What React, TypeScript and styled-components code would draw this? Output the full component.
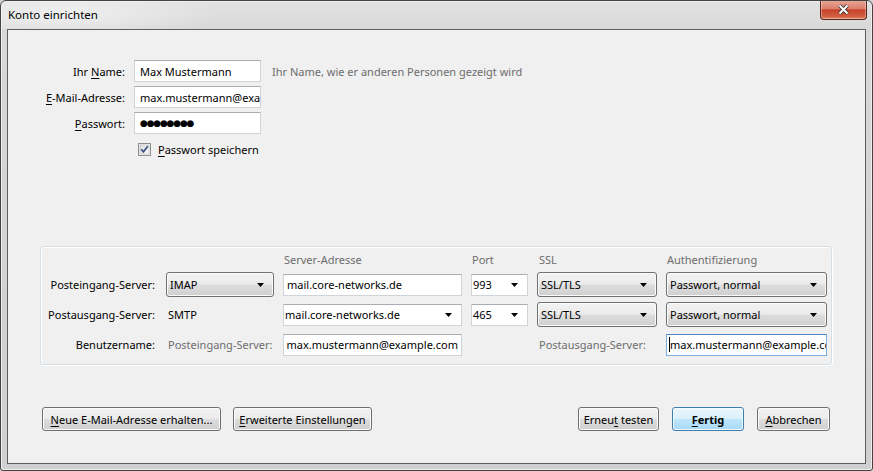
import * as React from "react";
import styled, { createGlobalStyle } from "styled-components";

const GlobalStyle = createGlobalStyle`
  html, body {
    margin: 0;
    padding: 0;
  }
  body {
    background: #d4d4d4;
    font-family: "Noto Sans", "Open Sans", sans-serif;
    font-size: 11px;
    color: #000;
  }
`;

const Window = styled.div`
  box-sizing: border-box;
  width: 873px;
  height: 471px;
  display: flex;
  flex-direction: column;
  border: 1px solid #434343;
  border-radius: 6px 6px 3px 3px;
  background: linear-gradient(180deg, #e2e2e2 0%, #d8d8d8 6%, #d3d3d3 50%, #d0d0d0 100%);
  box-shadow: inset 0 0 0 1px #eeeeee;
  overflow: hidden;
`;

const TitleBar = styled.div`
  height: 28px;
  display: flex;
  align-items: flex-start;
  padding: 0 5px 0 7px;
  background: radial-gradient(ellipse 160px 26px at 60px 14px, rgba(255, 255, 255, 0.55), rgba(255, 255, 255, 0) 100%);
`;

const Title = styled.div`
  line-height: 27px;
  font-size: 11.5px;
  flex: 1;
  color: #000;
`;

const CloseButton = styled.div`
  box-sizing: border-box;
  width: 47px;
  height: 20px;
  margin-top: -1px;
  border: 1px solid #5b2219;
  border-top: none;
  border-radius: 0 0 4px 4px;
  background: linear-gradient(180deg, #e8a899 0%, #dc806b 45%, #c64329 52%, #d25c3f 85%, #e08a6a 100%);
  box-shadow: inset 0 0 0 1px rgba(255, 255, 255, 0.35);
  display: flex;
  align-items: center;
  justify-content: center;
`;

const Client = styled.div`
  flex: 1;
  margin: 0 6px 6px 6px;
  border: 1px solid #5e5e5e;
  background: #f0f0f0;
  display: flex;
  flex-direction: column;
  padding: 30px 0 32px;
`;

const Form = styled.div`
  display: grid;
  grid-template-columns: 117px 127px 1fr;
  grid-auto-rows: 22px;
  column-gap: 9px;
  row-gap: 4px;
  align-items: center;
`;

const Label = styled.div`
  justify-self: end;
  white-space: nowrap;
`;

const Hint = styled.div`
  color: #6d6d6d;
  margin-left: 2px;
  white-space: nowrap;
`;

const Key = styled.span`
  text-decoration: underline;
  text-underline-offset: 2px;
`;

const Field = styled.div<{ $pad?: number; $focused?: boolean; $end?: boolean }>`
  box-sizing: border-box;
  height: 22px;
  border: 1px solid ${(p) => (p.$focused ? "#7aaee0" : "#d0d3d8")};
  border-top-color: ${(p) => (p.$focused ? "#4a88c2" : "#abadb3")};
  background: #fff;
  padding: 0 3px 0 ${(p) => p.$pad ?? 5}px;
  display: flex;
  align-items: center;
  justify-content: ${(p) => (p.$end ? "flex-end" : "flex-start")};
  overflow: hidden;
  white-space: nowrap;
`;

const Dots = styled.span`
  font-family: "DejaVu Sans", sans-serif;
  font-size: 9px;
  letter-spacing: -1.2px;
`;

const Caret = styled.span`
  flex: none;
  width: 1px;
  height: 15px;
  background: #000;
`;

const CheckRow = styled.label`
  grid-column: 2 / span 2;
  display: flex;
  align-items: center;
  gap: 7px;
  padding-left: 4px;
  white-space: nowrap;
`;

const Group = styled.div`
  margin: auto 33px 42px 32px;
  border: 1px solid #d5dfe5;
  border-radius: 3px;
  box-shadow: inset 1px 1px 0 #ffffff, 1px 1px 0 #ffffff;
  padding: 4px 0 7px 4px;
`;

const ServerGrid = styled.div`
  display: grid;
  grid-template-columns: 112px 108px 179px 57px 120px 161px;
  grid-template-rows: 16px 25px 25px 25px;
  column-gap: 9px;
  row-gap: 5px;
  align-items: center;
`;

const Head = styled.div<{ $pad?: number }>`
  color: #6d6d6d;
  padding-left: ${(p) => p.$pad ?? 1}px;
  white-space: nowrap;
`;

const RowLabel = styled.div`
  justify-self: end;
  padding-right: 2px;
  white-space: nowrap;
`;

const Plain = styled.div<{ $muted?: boolean }>`
  padding-left: 2px;
  white-space: nowrap;
  color: ${(p) => (p.$muted ? "#6d6d6d" : "#000")};
`;

const Select = styled.div`
  box-sizing: border-box;
  height: 25px;
  border: 1px solid #707070;
  border-radius: 3px;
  background: linear-gradient(180deg, #f2f2f2 0%, #ebebeb 48%, #dddddd 52%, #cfcfcf 100%);
  box-shadow: inset 0 0 0 1px #fbfbfb;
  display: flex;
  align-items: center;
  padding: 0 9px 0 3px;
  white-space: nowrap;
`;

const SelectText = styled.span`
  flex: 1;
  overflow: hidden;
`;

const ButtonRow = styled.div`
  display: flex;
  align-items: center;
  padding: 0 35px 0 34px;
`;

const ButtonGroup = styled.div<{ $gap: number }>`
  display: flex;
  gap: ${(p) => p.$gap}px;
`;

const Spacer = styled.div`
  flex: 1;
`;

const Button = styled.button<{ $w: number; $primary?: boolean }>`
  box-sizing: border-box;
  width: ${(p) => p.$w}px;
  height: 24px;
  padding: 0;
  font: inherit;
  font-weight: ${(p) => (p.$primary ? 700 : 400)};
  color: #000;
  border: 1px solid ${(p) => (p.$primary ? "#3c7fb1" : "#707070")};
  border-radius: 3px;
  background: ${(p) =>
    p.$primary
      ? "linear-gradient(180deg, #eaf6fd 0%, #d9f0fc 48%, #bee6fd 52%, #a7d9f5 100%)"
      : "linear-gradient(180deg, #f2f2f2 0%, #ebebeb 48%, #dddddd 52%, #cfcfcf 100%)"};
  box-shadow: inset 0 0 0 1px ${(p) => (p.$primary ? "#f4fbff" : "#fbfbfb")};
  white-space: nowrap;
`;

function Arrow() {
  return (
    <svg width="7" height="4" viewBox="0 0 7 4">
      <polygon points="0,0 7,0 3.5,4" fill="#000" />
    </svg>
  );
}

function DropDown({ text }: { text: string }) {
  return (
    <Select>
      <SelectText>{text}</SelectText>
      <Arrow />
    </Select>
  );
}

function Combo({ text, pad }: { text: string; pad: number }) {
  return (
    <Field $pad={pad} style={{ paddingRight: 9 }}>
      <SelectText>{text}</SelectText>
      <Arrow />
    </Field>
  );
}

function CheckBox() {
  return (
    <svg width="13" height="13" viewBox="0 0 13 13">
      <defs>
        <linearGradient id="cbg" x1="0" y1="0" x2="1" y2="1">
          <stop offset="0" stopColor="#dcdcdc" />
          <stop offset="1" stopColor="#fbfbfb" />
        </linearGradient>
      </defs>
      <rect x="0.5" y="0.5" width="12" height="12" fill="#f4f4f4" stroke="#8e8f8f" />
      <rect x="2" y="2" width="9" height="9" fill="url(#cbg)" stroke="#b8b8b8" strokeWidth="0.6" />
      <path d="M3.2 6.3 L5.4 8.8 L9.8 3.2" fill="none" stroke="#3d5284" strokeWidth="1.7" />
    </svg>
  );
}

function CloseGlyph() {
  return (
    <svg width="13" height="11" viewBox="0 0 13 11">
      <path d="M2.5 1.5 L10.5 9.5 M10.5 1.5 L2.5 9.5" stroke="#34302f" strokeWidth="3.8" />
      <path d="M2.5 1.5 L10.5 9.5 M10.5 1.5 L2.5 9.5" stroke="#ffffff" strokeWidth="2" />
    </svg>
  );
}

export default function App() {
  return (
    <>
      <GlobalStyle />
      <Window>
        <TitleBar>
          <Title>Konto einrichten</Title>
          <CloseButton>
            <CloseGlyph />
          </CloseButton>
        </TitleBar>
        <Client>
          <Form>
            <Label>
              Ihr <Key>N</Key>ame:
            </Label>
            <Field>Max Mustermann</Field>
            <Hint>Ihr Name, wie er anderen Personen gezeigt wird</Hint>

            <Label>
              <Key>E</Key>-Mail-Adresse:
            </Label>
            <Field>max.mustermann@example.com</Field>
            <div />

            <Label>
              <Key>P</Key>asswort:
            </Label>
            <Field>
              <Dots>●●●●●●●●</Dots>
            </Field>
            <div />

            <div />
            <CheckRow>
              <CheckBox />
              <span>
                <Key>P</Key>asswort speichern
              </span>
            </CheckRow>
          </Form>

          <Group>
            <ServerGrid>
              <div />
              <div />
              <Head>Server-Adresse</Head>
              <Head>Port</Head>
              <Head $pad={2}>SSL</Head>
              <Head>Authentifizierung</Head>

              <RowLabel>Posteingang-Server:</RowLabel>
              <DropDown text="IMAP" />
              <Field $pad={3}>mail.core-networks.de</Field>
              <Combo text="993" pad={1} />
              <DropDown text="SSL/TLS" />
              <DropDown text="Passwort, normal" />

              <RowLabel>Postausgang-Server:</RowLabel>
              <Plain>SMTP</Plain>
              <Combo text="mail.core-networks.de" pad={1} />
              <Combo text="465" pad={1} />
              <DropDown text="SSL/TLS" />
              <DropDown text="Passwort, normal" />

              <RowLabel>Benutzername:</RowLabel>
              <Plain $muted>Posteingang-Server:</Plain>
              <Field $end>max.mustermann@example.com</Field>
              <div />
              <Plain $muted>Postausgang-Server:</Plain>
              <Field $focused $pad={2}>
                <Caret />
                max.mustermann@example.com
              </Field>
            </ServerGrid>
          </Group>

          <ButtonRow>
            <ButtonGroup $gap={12}>
              <Button $w={179}>
                <Key>N</Key>eue E-Mail-Adresse erhalten...
              </Button>
              <Button $w={139}>
                <Key>E</Key>rweiterte Einstellungen
              </Button>
            </ButtonGroup>
            <Spacer />
            <ButtonGroup $gap={13}>
              <Button $w={81}>
                Erneu<Key>t</Key> testen
              </Button>
              <Button $w={72} $primary>
                <Key>F</Key>ertig
              </Button>
              <Button $w={73}>
                <Key>A</Key>bbrechen
              </Button>
            </ButtonGroup>
          </ButtonRow>
        </Client>
      </Window>
    </>
  );
}
